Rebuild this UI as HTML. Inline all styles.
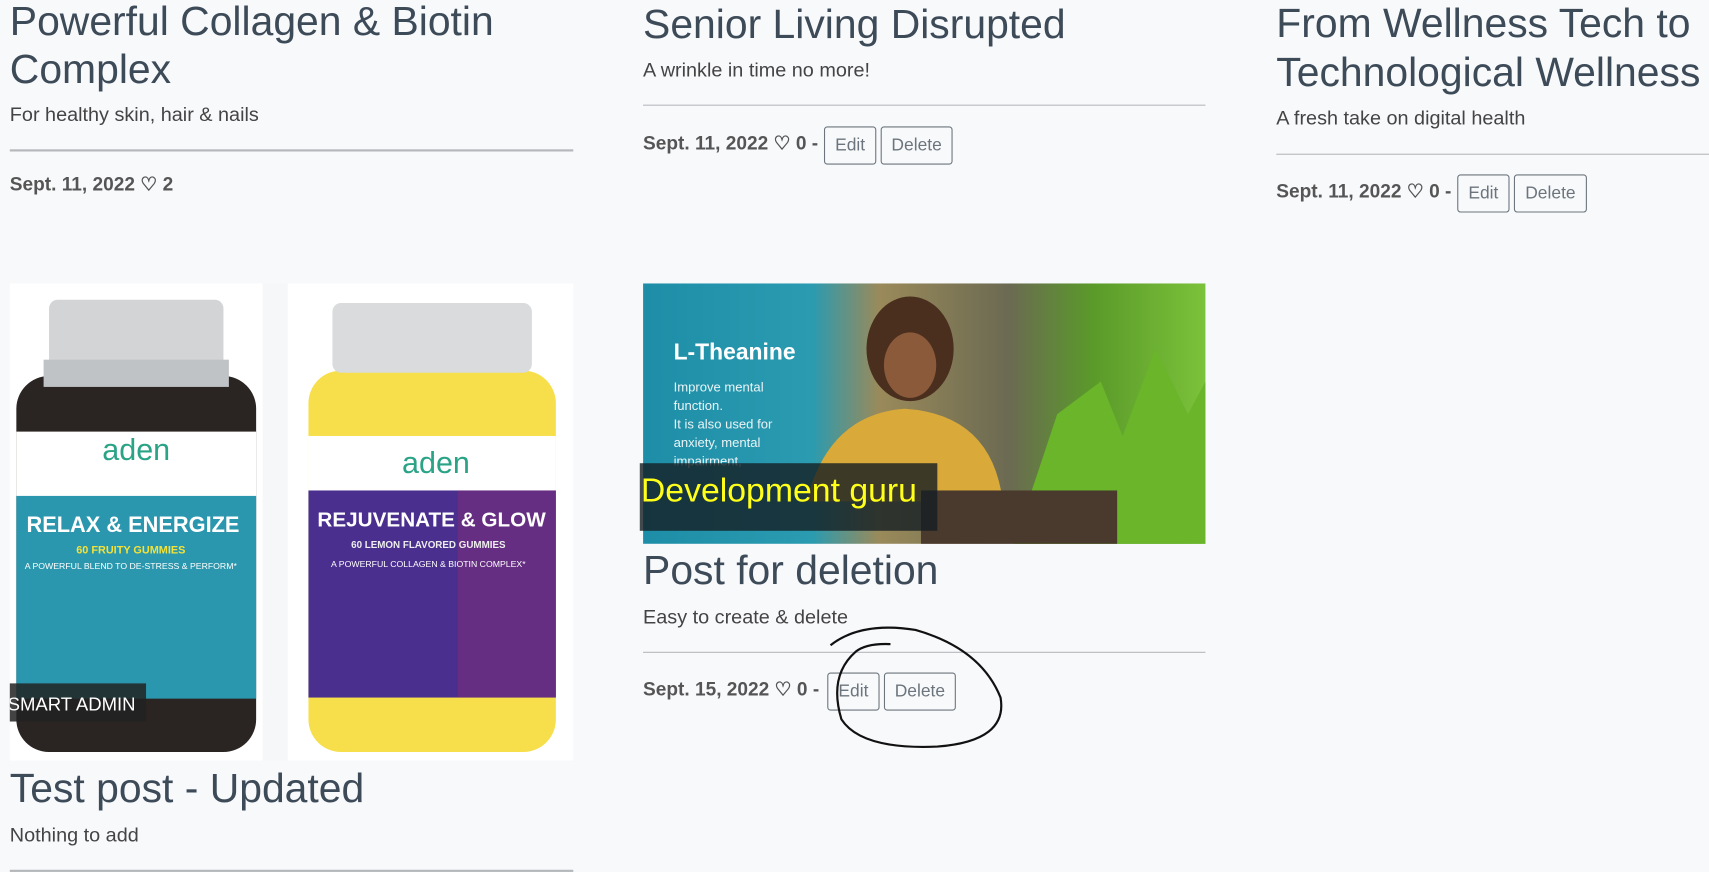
<!DOCTYPE html>
<html><head><meta charset="utf-8"><style>
html,body{margin:0;padding:0;background:#f8f9fb;overflow:hidden}
#w{position:absolute;left:0;top:0;width:1568px;height:800px;transform:scale(1.08992);transform-origin:0 0;font-family:"Liberation Sans",sans-serif;color:#3b4754}
.a{position:absolute;white-space:nowrap}
.t{font-size:37.5px;line-height:44px;color:#3d4a58}
.s{font-size:18.2px;color:#444}
.d{font-size:17.5px;color:#555;font-weight:bold}
.hr{position:absolute;height:1px;background:#b5b8bb}
.b{position:absolute;border:1px solid #6c757d;border-radius:3px;font-size:16px;color:#6c757d;text-align:center;box-sizing:border-box;line-height:33px;height:35px}
</style></head><body><div id="w">
<div class="a t" style="left:9px;top:-3px">Powerful Collagen &amp; Biotin</div>
<div class="a t" style="left:9px;top:41px">Complex</div>
<div class="a s" style="left:9px;top:95px">For healthy skin, hair &amp; nails</div>
<div class="hr" style="left:9px;top:137px;width:517px;height:2px"></div>
<div class="a d" style="left:9px;top:159px">Sept. 11, 2022 ♡ 2</div>

<div class="a t" style="left:590px;top:0px">Senior Living Disrupted</div>
<div class="a s" style="left:590px;top:54px">A wrinkle in time no more!</div>
<div class="hr" style="left:590px;top:96px;width:516px"></div>
<div class="a d" style="left:590px;top:121px">Sept. 11, 2022 ♡ 0 -</div>
<div class="b" style="left:756px;top:116px;width:48px">Edit</div>
<div class="b" style="left:808px;top:116px;width:66px">Delete</div>

<div class="a t" style="left:1171px;top:-1px">From Wellness Tech to</div>
<div class="a t" style="left:1171px;top:44px">Technological Wellness</div>
<div class="a s" style="left:1171px;top:98px">A fresh take on digital health</div>
<div class="hr" style="left:1171px;top:141px;width:400px"></div>
<div class="a d" style="left:1171px;top:165px">Sept. 11, 2022 ♡ 0 -</div>
<div class="b" style="left:1337px;top:160px;width:48px">Edit</div>
<div class="b" style="left:1389px;top:160px;width:67px">Delete</div>

<svg class="a" style="left:9px;top:260px" width="517" height="438" viewBox="9 260 517 438">
<rect x="9" y="260" width="517" height="438" fill="#fff"/>
<rect x="241" y="260" width="23" height="438" fill="#f6f7f8"/>
<rect x="15" y="345" width="220" height="345" rx="30" fill="#2a2522"/>
<rect x="45" y="275" width="160" height="72" rx="8" fill="#d2d4d6"/>
<rect x="40" y="330" width="170" height="25" fill="#bfc3c6"/>
<rect x="15" y="396" width="220" height="60" fill="#fff"/>
<rect x="15" y="455" width="220" height="186" fill="#2a97ae"/>
<text x="125" y="422" font-size="28" fill="#2aa386" text-anchor="middle" font-family="Liberation Sans">aden</text>
<text x="122" y="488" font-size="20" fill="#fff" font-weight="bold" text-anchor="middle" font-family="Liberation Sans">RELAX &amp; ENERGIZE</text>
<text x="120" y="508" font-size="10" fill="#f3e23a" font-weight="bold" text-anchor="middle" font-family="Liberation Sans">60 FRUITY GUMMIES</text>
<text x="120" y="522" font-size="8" fill="#fff" text-anchor="middle" font-family="Liberation Sans">A POWERFUL BLEND TO DE-STRESS &amp; PERFORM*</text>
<rect x="283" y="340" width="227" height="350" rx="30" fill="#f6df4a"/>
<rect x="305" y="278" width="183" height="64" rx="8" fill="#d9dbdd"/>
<rect x="283" y="400" width="227" height="52" fill="#fff"/>
<rect x="283" y="450" width="227" height="190" fill="#4a2f8f"/>
<rect x="420" y="450" width="90" height="190" fill="#7a2f7a" opacity=".6"/>
<text x="400" y="434" font-size="28" fill="#2aa386" text-anchor="middle" font-family="Liberation Sans">aden</text>
<text x="396" y="483" font-size="19" fill="#fff" font-weight="bold" text-anchor="middle" font-family="Liberation Sans">REJUVENATE &amp; GLOW</text>
<text x="393" y="503" font-size="9" fill="#eee" font-weight="bold" text-anchor="middle" font-family="Liberation Sans">60 LEMON FLAVORED GUMMIES</text>
<text x="393" y="520" font-size="8" fill="#fff" text-anchor="middle" font-family="Liberation Sans">A POWERFUL COLLAGEN &amp; BIOTIN COMPLEX*</text>
<rect x="7" y="627" width="127" height="35" fill="#222" opacity=".85"/>
<text x="7" y="652" font-size="17" fill="#fff" font-family="Liberation Sans">SMART ADMIN</text>
</svg>
<div class="a t" style="left:9px;top:701px">Test post - Updated</div>
<div class="a s" style="left:9px;top:756px">Nothing to add</div>
<div class="hr" style="left:9px;top:798px;width:517px;height:2px"></div>

<svg class="a" style="left:590px;top:260px" width="516" height="239" viewBox="0 0 516 239">
<defs><linearGradient id="g" x1="0" x2="1"><stop offset="0" stop-color="#1e8ea8"/><stop offset=".3" stop-color="#2a9bb0"/><stop offset=".42" stop-color="#9a8a5a"/><stop offset=".65" stop-color="#6b6a52"/><stop offset=".8" stop-color="#5a9a2a"/><stop offset="1" stop-color="#7cc23a"/></linearGradient></defs>
<rect width="516" height="239" fill="url(#g)"/>
<ellipse cx="245" cy="60" rx="40" ry="48" fill="#4a2e1e"/>
<ellipse cx="245" cy="75" rx="24" ry="30" fill="#8a5a3a"/>
<path d="M150 200 Q170 120 240 115 Q320 120 330 200 Z" fill="#d9aa3a"/>
<path d="M340 240 L380 120 L420 90 L440 140 L470 60 L500 120 L516 90 L516 239 Z" fill="#6ab52a"/>
<rect x="255" y="190" width="180" height="49" fill="#4a3a2e"/>
<text x="28" y="70" font-size="21" fill="#fff" font-weight="bold" font-family="Liberation Sans">L-Theanine</text>
<text x="28" y="99" font-size="12" fill="#eaf4f6" font-family="Liberation Sans">Improve mental</text>
<text x="28" y="116" font-size="12" fill="#eaf4f6" font-family="Liberation Sans">function.</text>
<text x="28" y="133" font-size="12" fill="#eaf4f6" font-family="Liberation Sans">It is also used for</text>
<text x="28" y="150" font-size="12" fill="#eaf4f6" font-family="Liberation Sans">anxiety, mental</text>
<text x="28" y="167" font-size="12" fill="#eaf4f6" font-family="Liberation Sans">impairment,</text>
</svg>
<div class="a" style="left:587px;top:425px;width:273px;height:62px;background:rgba(20,30,35,.8)"></div>
<div class="a" style="left:588px;top:432px;font-size:31px;color:#ffff1a">Development guru</div>
<div class="a t" style="left:590px;top:501px">Post for deletion</div>
<div class="a s" style="left:590px;top:556px">Easy to create &amp; delete</div>
<div class="hr" style="left:590px;top:598px;width:516px"></div>
<div class="a d" style="left:590px;top:622px">Sept. 15, 2022 ♡ 0 -</div>
<div class="b" style="left:759px;top:617px;width:48px">Edit</div>
<div class="b" style="left:811px;top:617px;width:66px">Delete</div>
<svg class="a" style="left:0;top:0" width="1568" height="800">
<path d="M762 592 Q790 570 840 578 Q900 595 918 640 Q925 680 860 685 Q790 688 772 660 Q760 620 785 598 Q795 590 817 591" fill="none" stroke="#111" stroke-width="2"/>
</svg>
</div></body></html>
